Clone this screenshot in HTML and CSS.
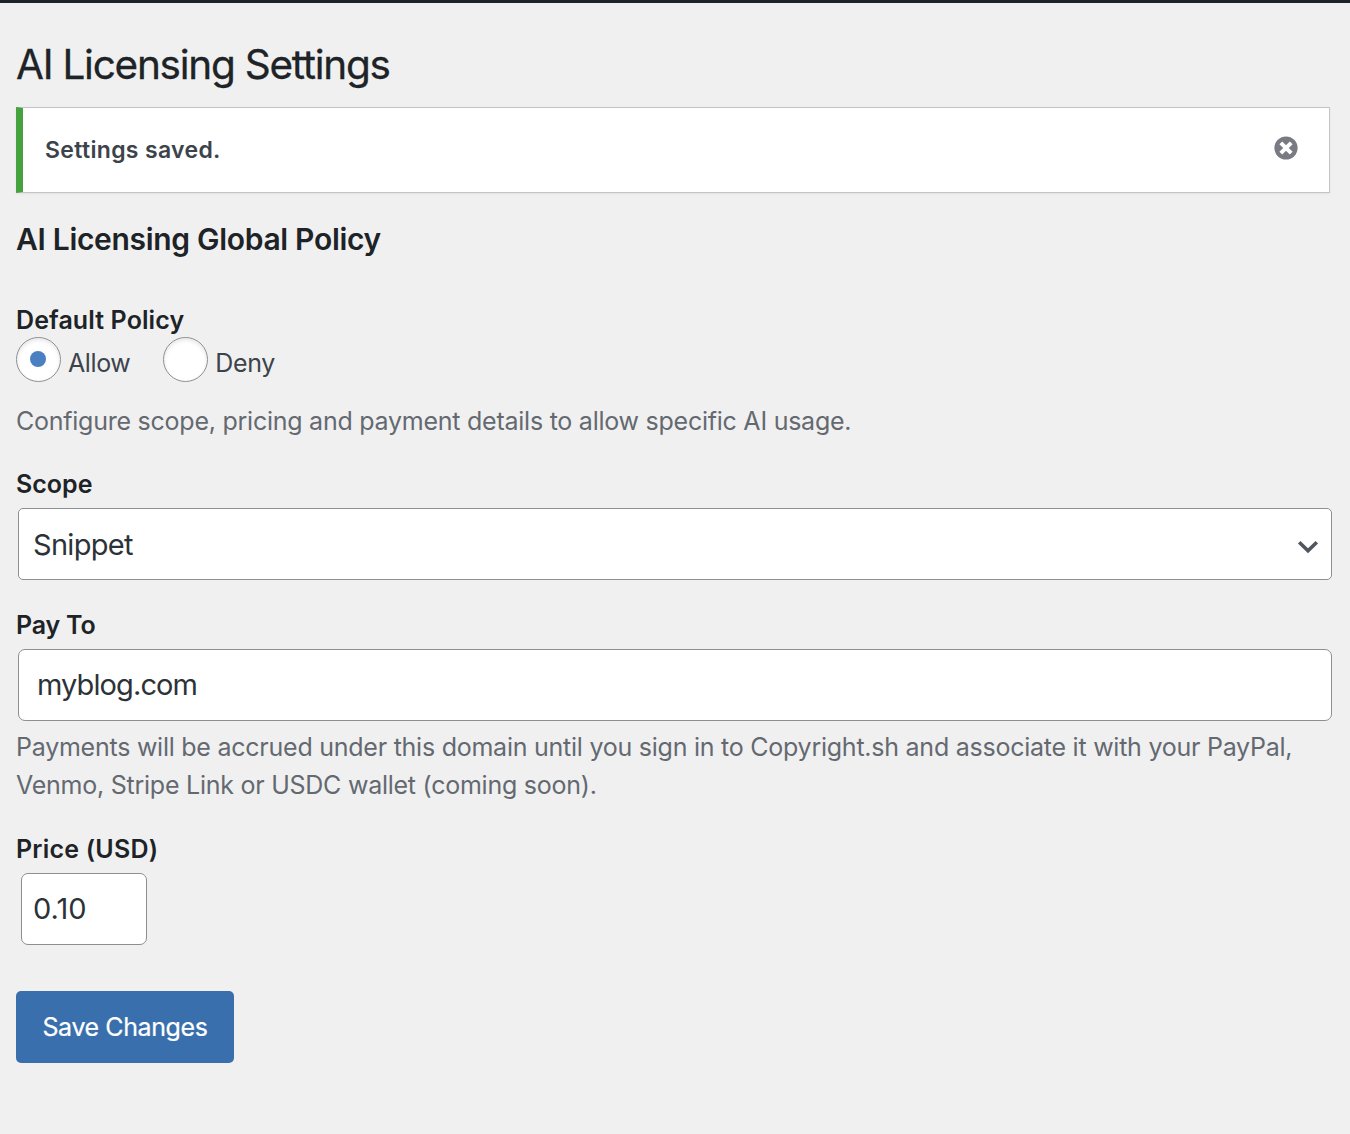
FILE: index.html
```html
<!DOCTYPE html>
<html lang="en">
<head>
<meta charset="utf-8">
<title>AI Licensing Settings</title>
<link rel="stylesheet" href="styles.css">
</head>
<body>
<main class="wrap">
  <h1 class="title"><span>AI Licensing Settings</span></h1>
  <div class="notice">
    <strong class="notice-text">Settings saved.</strong>
    <button class="dismiss" type="button" aria-label="Dismiss this notice">
      <svg width="24" height="24" viewBox="0 0 24 24"><circle cx="12" cy="12" r="11.6" fill="#787c82"/><path d="M6.8 6.8l10.4 10.4M17.2 6.8L6.8 17.2" stroke="#fff" stroke-width="4"/></svg>
    </button>
  </div>
  <h2 class="section"><span>AI Licensing Global Policy</span></h2>
  <form class="form">
    <div class="label policy-label"><span>Default Policy</span></div>
    <div class="radios">
      <label class="radio"><span class="dot checked"></span><span class="radio-text">Allow</span></label>
      <label class="radio"><span class="dot"></span><span class="radio-text">Deny</span></label>
    </div>
    <p class="help intro"><span>Configure scope, pricing and payment details to allow specific AI usage.</span></p>
    <div class="label scope-label"><span>Scope</span></div>
    <div class="field select"><span>Snippet</span>
      <svg class="chevron" width="22" height="14" viewBox="0 0 22 14"><path d="M2.2 2.2l8.8 8.6 8.8-8.6" fill="none" stroke="#50575e" stroke-width="3.6"/></svg>
    </div>
    <div class="label pay-label"><span>Pay To</span></div>
    <div class="field pay"><span>myblog.com</span></div>
    <p class="help payments"><span>Payments will be accrued under this domain until you sign in to Copyright.sh and associate it with your PayPal,</span><br><span>Venmo, Stripe Link or USDC wallet (coming soon).</span></p>
    <div class="label price-label"><span>Price (USD)</span></div>
    <div class="field price"><span>0.10</span></div>
    <button class="save" type="button"><span>Save Changes</span></button>
  </form>
</main>
</body>
</html>
```
FILE: styles.css
```css
* { box-sizing: border-box; }
body {
  margin: 0;
  height: 1134px;
  background: #f0f0f0;
  border-top: 3px solid #1d2327;
  color: #1d2327;
  font-family: Inter, "Liberation Sans", sans-serif;
}
.wrap { padding: 34px 18px 0 16px; }
.title { margin: 0; height: 70px; line-height: 56px; font-size: 40.5px; font-weight: 400; letter-spacing: -1.25px; -webkit-text-stroke: 0.3px currentColor; }
.notice {
  display: flex; align-items: center; justify-content: space-between;
  width: 1314px; height: 86px; padding: 0 31px 0 22px;
  background: #fff; border: 1px solid #c3c4c7; border-left: 7px solid #46a23e;
  box-shadow: 0 1px 2px rgba(0,0,0,.06);
}
.notice-text { font-size: 23px; font-weight: 600; letter-spacing: 0.33px; color: #3c434a; }
.dismiss { display: flex; padding: 0; border: 0; background: none; margin-top: -4px; }
.section { margin: 25px 0 0; height: 43px; line-height: 42px; font-size: 30px; font-weight: 600; letter-spacing: -0.31px; }
.label { height: 36px; line-height: 36px; font-size: 25px; font-weight: 600; }
.policy-label { margin-top: 41px; height: 35px; letter-spacing: 0.1px; }
.radios { display: flex; gap: 33px; height: 46px; }
.radio { display: flex; gap: 7px; }
.dot { display: flex; align-items: center; justify-content: center; width: 45px; height: 45px; padding: 0 1px 1px 0; border: 1px solid #8c8f94; border-radius: 50%; background: #fff; box-shadow: inset 0 2px 4px rgba(0,0,0,.1); }
.checked::before { content: ""; width: 16px; height: 16px; border-radius: 50%; background: #4a7fc1; }
.radio-text { line-height: 52px; font-size: 25px; letter-spacing: -0.4px; color: #3c434a; }
.help { margin: 0; font-size: 25px; line-height: 38px; letter-spacing: -0.246px; color: #646970; white-space: nowrap; }
.intro { margin-top: 19px; }
.scope-label { margin-top: 26px; height: 42px; }
.field {
  display: flex; align-items: center; justify-content: space-between;
  width: 1314px; height: 72px; margin-left: 2px; padding: 0 12px 0 14px;
  background: #fff; border: 1px solid #8c8f94; border-radius: 7px;
  font-size: 29px; letter-spacing: -0.7px; color: #2c3338;
}
.select { border-radius: 5px; }
.chevron { margin-top: 5px; }
.pay-label { margin-top: 27px; height: 42px; letter-spacing: -0.2px; }
.pay { padding: 0 12px 2px 18px; letter-spacing: -0.9px; }
.payments { margin-top: 7px; }
.price-label { margin-top: 27px; height: 42px; letter-spacing: 0.22px; }
.price { width: 126px; margin-left: 5px; padding: 0 0 2px 11px; letter-spacing: 0; }
.save { display: block; width: 218px; height: 72px; margin-top: 46px; padding: 0; border: 0; border-radius: 5px; background: #3a6fad; color: #fff; font-family: inherit; font-size: 25px; letter-spacing: -0.4px; -webkit-text-stroke: 0.2px currentColor; }
```
